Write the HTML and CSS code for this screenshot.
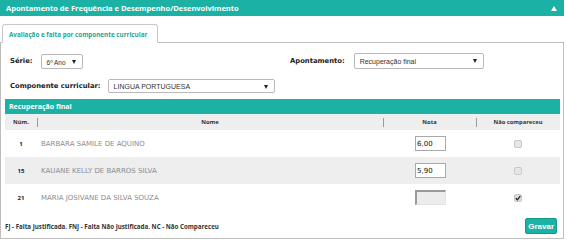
FILE: index.html
```html
<!DOCTYPE html>
<html lang="pt-BR">
  <head>
    <meta charset="utf-8">
    <title>Apontamento de Frequência e Desempenho/Desenvolvimento</title>
    <link rel="stylesheet" href="styles.css">
  </head>
  <body>
    <div class="page">
      <!-- Cabeçalho -->
      <div class="page-header">
        <span>Apontamento de Frequência e Desempenho/Desenvolvimento</span>
        <span class="collapse-icon"></span>
      </div>

      <!-- Abas -->
      <div class="tabs">
        <div class="tab active">Avaliação e falta por componente curricular</div>
      </div>

      <div class="panel">
        <!-- Filtros -->
        <div class="filter-row">
          <div class="filter-group first">
            <label class="filter-label">Série:</label>
            <div class="fake-select serie">6º Ano</div>
          </div>
          <div class="filter-group">
            <label class="filter-label">Apontamento:</label>
            <div class="fake-select apontamento">Recuperação final</div>
          </div>
        </div>
        <div class="filter-row">
          <div class="filter-group">
            <label class="filter-label">Componente curricular:</label>
            <div class="fake-select componente">LINGUA PORTUGUESA</div>
          </div>
        </div>

        <!-- Tabela -->
        <div class="section-header">Recuperação final</div>
        <table class="grade-table">
          <thead>
            <tr>
              <th class="col-num">Núm.</th>
              <th class="col-name sep">Nome</th>
              <th class="col-grade sep">Nota</th>
              <th class="col-absent sep">Não compareceu</th>
            </tr>
          </thead>
          <tbody>
            <tr>
              <td class="col-num">1</td>
              <td class="col-name">BARBARA SAMILE DE AQUINO</td>
              <td class="col-grade"><input class="grade-input" type="text" value="6,00"></td>
              <td class="col-absent"><span class="check"></span></td>
            </tr>
            <tr class="striped">
              <td class="col-num">15</td>
              <td class="col-name">KAUANE KELLY DE BARROS SILVA</td>
              <td class="col-grade"><input class="grade-input" type="text" value="5,90"></td>
              <td class="col-absent"><span class="check"></span></td>
            </tr>
            <tr>
              <td class="col-num">21</td>
              <td class="col-name">MARIA JOSIVANE DA SILVA SOUZA</td>
              <td class="col-grade"><input class="grade-input" type="text" value="" disabled></td>
              <td class="col-absent">
                <span class="check checked">
                  <svg width="6" height="6" viewBox="0 0 6 6"><path d="M0.8 3.2 L2.4 4.8 L5.3 1.2" fill="none" stroke="#222" stroke-width="1.3"/></svg>
                </span>
              </td>
            </tr>
          </tbody>
        </table>

        <!-- Rodapé -->
        <div class="panel-footer">
          <span class="legend">FJ - Falta Justificada. FNJ - Falta Não Justificada. NC - Não Compareceu</span>
          <button class="save-button">Gravar</button>
        </div>
      </div>
    </div>
  </body>
</html>
```

FILE: styles.css
```css
body {
  margin: 0;
  padding: 0;
  font-family: "Liberation Sans", Arial, sans-serif;
  background: #ffffff;
}

.page {
  width: 564px;
}

/* ===== Header ===== */
.page-header {
  display: flex;
  align-items: center;
  justify-content: space-between;
  height: 16px;
  padding: 0 6px;
  background: #1bb2a5;
  color: #ffffff;
  font-family: "Open Sans", sans-serif;
  font-weight: 700;
  font-size: 7.5px;
}

.collapse-icon {
  width: 0;
  height: 0;
  border-left: 3.5px solid transparent;
  border-right: 3.5px solid transparent;
  border-bottom: 5px solid #ffffff;
  margin-right: 1px;
}

/* ===== Tabs ===== */
.tabs {
  display: flex;
  margin-top: 8px;
  padding-left: 2px;
}

.tab {
  position: relative;
  z-index: 1;
  width: 156px;
  height: 19px;
  line-height: 19px;
  padding-left: 6px;
  box-sizing: border-box;
  border: 1px solid #c8c8c8;
  border-bottom: 1px solid #ffffff;
  border-radius: 3px 3px 0 0;
  margin-bottom: -1px;
  background: #ffffff;
  color: #1aa89b;
  font-family: "Open Sans", sans-serif;
  font-weight: 700;
  font-size: 6.3px;
}

/* ===== Panel ===== */
.panel {
  width: 564px;
  box-sizing: border-box;
  border: 1px solid #bdbdbd;
  padding: 10px 3px 4px 4px;
}

.filter-row {
  display: flex;
  align-items: center;
  margin-bottom: 10px;
}

.filter-group {
  display: flex;
  align-items: center;
}

.filter-group.first {
  width: 280px;
}

.filter-label {
  padding-left: 5px;
  font-family: "DejaVu Sans", sans-serif;
  font-weight: 700;
  font-size: 6.8px;
  color: #222222;
}

.fake-select {
  position: relative;
  height: 15px;
  line-height: 15px;
  box-sizing: border-box;
  border: 1px solid #b9b9b9;
  border-radius: 2px;
  padding-left: 5px;
  font-size: 7px;
  color: #333333;
  background: #ffffff;
}

.fake-select::after {
  content: "";
  position: absolute;
  right: 6px;
  top: 5px;
  border-left: 2.5px solid transparent;
  border-right: 2.5px solid transparent;
  border-top: 4px solid #222222;
}

.fake-select.serie {
  width: 42px;
  margin-left: 8px;
  font-size: 6.5px;
}

.fake-select.apontamento {
  width: 130px;
  margin-left: 9px;
  height: 16px;
  line-height: 16px;
}

.fake-select.componente {
  width: 167px;
  margin-left: 7px;
  height: 14px;
  line-height: 14px;
}

/* ===== Table ===== */
.section-header {
  height: 15px;
  line-height: 15px;
  margin-top: -4px;
  padding-left: 4px;
  background: #1bb2a5;
  color: #ffffff;
  font-family: "Open Sans", sans-serif;
  font-weight: 700;
  font-size: 7px;
}

.grade-table {
  width: 555px;
  border-collapse: collapse;
  table-layout: fixed;
}

.grade-table th {
  height: 16px;
  padding: 0;
  background: #eeeeee;
  font-family: "Open Sans", sans-serif;
  font-weight: 700;
  font-size: 5.8px;
  color: #333333;
}

.grade-table th.sep {
  background: linear-gradient(#9a9a9a, #9a9a9a) left center / 1px 9px no-repeat, #eeeeee;
}

.grade-table td {
  height: 27px;
  padding: 0;
  font-size: 8px;
  color: #8a8a8a;
}

.grade-table tr.striped td {
  background: #eeeeee;
}

.col-num {
  width: 32px;
  text-align: center;
}

td.col-num {
  font-family: "Open Sans", sans-serif;
  font-weight: 700;
  font-size: 6px;
  color: #222222;
}

.col-name {
  width: 346px;
}

td.col-name {
  padding-left: 4px;
  font-family: "DejaVu Sans", sans-serif;
  font-size: 7px;
  color: #8c8c8c;
}

.col-grade {
  width: 93px;
  text-align: center;
}

.col-absent {
  width: 84px;
  text-align: center;
}

.grade-input {
  width: 31px;
  height: 15px;
  box-sizing: border-box;
  margin: 0 0 0 2px;
  padding: 0 1px;
  border: 1px solid #a9a9a9;
  font-family: "DejaVu Sans", sans-serif;
  font-size: 7px;
  color: #111111;
  vertical-align: middle;
  background: #ffffff;
}

.grade-input:disabled {
  background: #ececec;
  border-top: 2px solid #9a9a9a;
  border-left: 2px solid #9a9a9a;
  border-right: 1px solid #e3e3e3;
  border-bottom: 1px solid #e3e3e3;
}

.check {
  display: inline-flex;
  align-items: center;
  justify-content: center;
  width: 6px;
  height: 6px;
  border: 1px solid #c8c8c8;
  border-radius: 2px;
  background: #e6e6e6;
  vertical-align: middle;
}

.check.checked {
  background: #dcdcdc;
}

/* ===== Footer ===== */
.panel-footer {
  display: flex;
  align-items: center;
  justify-content: space-between;
  margin-top: 7px;
  padding-right: 3px;
}

.legend {
  font-family: "Open Sans", sans-serif;
  font-weight: 700;
  font-size: 6.2px;
  color: #333333;
}

.save-button {
  height: 16px;
  padding: 0 2px;
  border: 1px solid #109a8e;
  border-radius: 2px;
  background: #1bb2a5;
  color: #ffffff;
  font-family: "Liberation Sans", sans-serif;
  font-weight: 700;
  font-size: 8px;
}
```
